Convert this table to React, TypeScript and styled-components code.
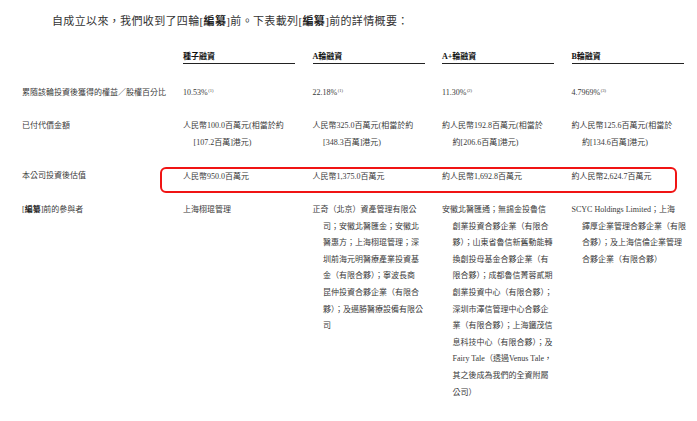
import styled, { createGlobalStyle } from "styled-components";

const GlobalStyle = createGlobalStyle`
  html, body {
    margin: 0;
    padding: 0;
    background: #fff;
  }
  body {
    font-family: "Liberation Serif", "Noto Sans CJK TC", serif;
    color: #333;
  }
`;

const Page = styled.div`
  padding: 13px 0 0 22px;
  width: 675px;
`;

const Intro = styled.p`
  margin: 0;
  padding-left: 30px;
  font-size: 11px;
  line-height: 16px;
  letter-spacing: 0.35px;
  color: #333;
  white-space: nowrap;
`;

const Table = styled.div`
  display: grid;
  grid-template-columns: 143.5px repeat(4, 112px);
  column-gap: 17.5px;
  row-gap: 17px;
  margin-top: 22px;
  font-size: 8px;
  line-height: 16.6px;
`;

const HeadCell = styled.div`
  font-weight: bold;
  color: #111;
  line-height: 12px;
  border-bottom: 1.2px solid #222;
  margin-bottom: 3.7px;
  white-space: nowrap;
`;

const Label = styled.div`
  white-space: nowrap;
  color: #3a3a3a;
`;

const Cell = styled.div`
  color: #3a3a3a;
`;

const Line = styled.div`
  white-space: nowrap;
  & + & {
    padding-left: 10.5px;
  }
`;

const Value = styled.div`
  white-space: nowrap;
`;

const Sup = styled.span`
  font-size: 4.5px;
  vertical-align: 3px;
  line-height: 0;
  margin-left: 0.5px;
`;

const Redacted = styled.b`
  font-weight: bold;
  color: #222;
`;

const Highlight = styled.div`
  grid-column: 2 / -1;
  display: grid;
  grid-template-columns: repeat(4, 112px);
  column-gap: 17.5px;
  margin: -1.5px 6.5px -7.9px -23px;
  padding: 0 0 5.4px 21px;
  border: 2px solid #f01414;
  border-radius: 6px;
  color: #3a3a3a;
`;

const Spacer = styled.div``;

const R = () => (
  <>
    [<Redacted>編纂</Redacted>]
  </>
);

const paid = [
  ["人民幣100.0百萬元(相當於約", "[107.2百萬]港元)"],
  ["人民幣325.0百萬元(相當於約", "[348.3百萬]港元)"],
  ["約人民幣192.8百萬元(相當於", "約[206.6百萬]港元)"],
  ["約人民幣125.6百萬元(相當於", "約[134.6百萬]港元)"],
];

const valuation = [
  "人民幣950.0百萬元",
  "人民幣1,375.0百萬元",
  "約人民幣1,692.8百萬元",
  "約人民幣2,624.7百萬元",
];

const equity = [
  ["10.53%", "(1)"],
  ["22.18%", "(1)"],
  ["11.30%", "(2)"],
  ["4.7969%", "(3)"],
];

const participants = [
  ["上海栩琨管理"],
  [
    "正奇（北京）資產管理有限公",
    "司；安徽北醫匯金；安徽北",
    "醫惠方；上海栩琨管理；深",
    "圳前海元明醫療產業投資基",
    "金（有限合夥）；寧波長商",
    "昆仲投資合夥企業（有限合",
    "夥）；及邁勝醫療設備有限公",
    "司",
  ],
  [
    "安徽北醫匯通；無錫金投魯信",
    "創業投資合夥企業（有限合",
    "夥）；山東省魯信新舊動能轉",
    "換創投母基金合夥企業（有",
    "限合夥）；成都魯信菁蓉貳期",
    "創業投資中心（有限合夥）；",
    "深圳市澤信管理中心合夥企",
    "業（有限合夥）；上海鐵茂信",
    "息科技中心（有限合夥）；及",
    "Fairy Tale（透過Venus Tale，",
    "其之後成為我們的全資附屬",
    "公司）",
  ],
  [
    "SCYC Holdings Limited；上海",
    "鐸厚企業管理合夥企業（有限",
    "合夥）；及上海信倫企業管理",
    "合夥企業（有限合夥）",
  ],
];

const headers = ["種子融資", "A輪融資", "A+輪融資", "B輪融資"];

export default function App() {
  return (
    <>
      <GlobalStyle />
      <Page>
        <Intro>
          自成立以來，我們收到了四輪<R />前。下表載列<R />前的詳情概要：
        </Intro>
        <Table>
          <Spacer />
          {headers.map((h) => (
            <HeadCell key={h}>{h}</HeadCell>
          ))}

          <Label>累隨該輪投資後獲得的權益／股權百分比</Label>
          {equity.map(([v, n]) => (
            <Cell key={v}>
              <Value>
                {v}
                <Sup>{n}</Sup>
              </Value>
            </Cell>
          ))}

          <Label>已付代價金額</Label>
          {paid.map((lines) => (
            <Cell key={lines[0]}>
              {lines.map((l) => (
                <Line key={l}>{l}</Line>
              ))}
            </Cell>
          ))}

          <Label>本公司投資後估值</Label>
          <Highlight>
            {valuation.map((v) => (
              <Value key={v}>{v}</Value>
            ))}
          </Highlight>

          <Label>
            <R />前的參與者
          </Label>
          {participants.map((lines) => (
            <Cell key={lines[0]}>
              {lines.map((l) => (
                <Line key={l}>{l}</Line>
              ))}
            </Cell>
          ))}
        </Table>
      </Page>
    </>
  );
}
